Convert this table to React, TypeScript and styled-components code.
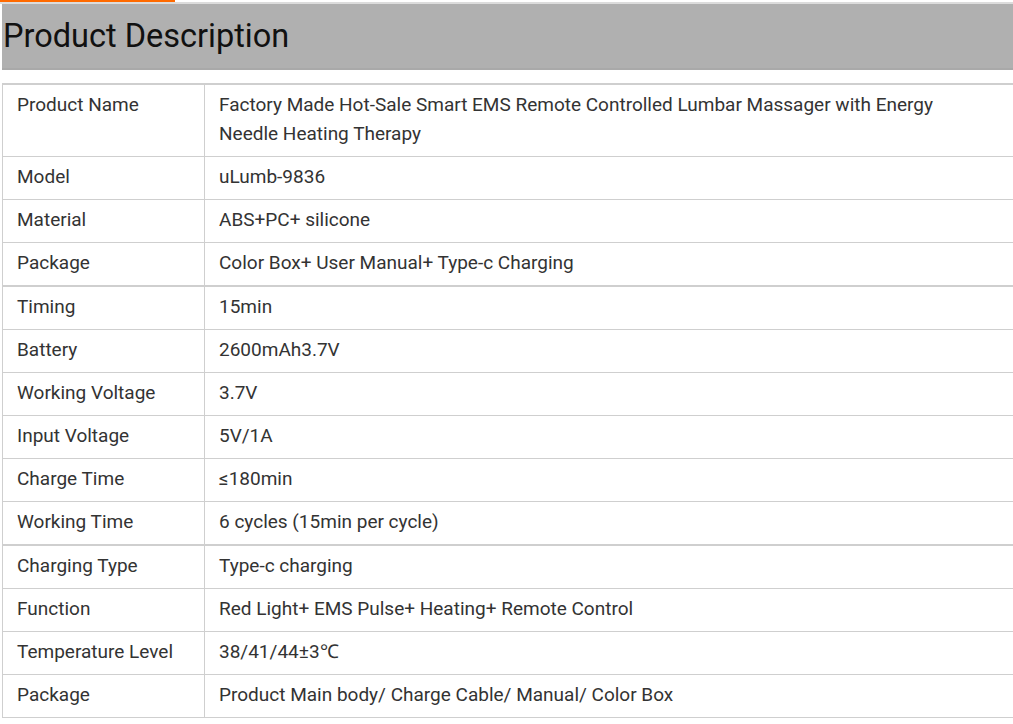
import React from 'react';
import styled, { createGlobalStyle } from 'styled-components';

const GlobalStyle = createGlobalStyle`
  html, body {
    margin: 0;
    padding: 0;
    background: #fff;
    overflow: hidden;
  }
  body {
    font-family: Roboto, "Liberation Sans", Arial, sans-serif;
  }
`;

const Page = styled.div`
  width: 1013px;
  overflow: hidden;
`;

const TopStrip = styled.div`
  height: 2px;
  border-bottom: 2px solid #dcdcdc;
  position: relative;
  &::before {
    content: '';
    position: absolute;
    left: 0;
    top: 0;
    width: 175px;
    height: 2px;
    background: #ff6a00;
  }
`;

const Section = styled.div`
  margin-left: 2px;
  width: 1030px;
`;

const Header = styled.h2`
  margin: 0;
  height: 64px;
  background: #b0b0b0;
  border-bottom: 2px solid #a9a9a9;
  color: #111;
  font-weight: 400;
  font-size: 32.5px;
  line-height: 64px;
  padding-left: 1px;
`;

const SpecTable = styled.table`
  margin-top: 13px;
  width: 100%;
  border-collapse: collapse;
  border-top: 2px solid #cfcfcf;
  font-size: 19px;
  color: #333;
`;

const Row = styled.tr<{ $thick?: boolean }>`
  border-top: ${p => (p.$thick ? '2px' : '1px')} solid #cfcfcf;
`;

const Cell = styled.td<{ $label?: boolean }>`
  border: 1px solid #cfcfcf;
  border-top: none;
  vertical-align: top;
  line-height: 29px;
  padding: 5px 14px 8px 14px;
  width: ${p => (p.$label ? '173px' : 'auto')};
  padding-right: ${p => (p.$label ? '14px' : '70px')};
`;

const specs: { name: string; value: string; thick?: boolean }[] = [
  { name: 'Product Name', value: 'Factory Made Hot-Sale Smart EMS Remote Controlled Lumbar Massager with Energy Needle Heating Therapy' },
  { name: 'Model', value: 'uLumb-9836' },
  { name: 'Material', value: 'ABS+PC+ silicone' },
  { name: 'Package', value: 'Color Box+ User Manual+ Type-c Charging' },
  { name: 'Timing', value: '15min', thick: true },
  { name: 'Battery', value: '2600mAh3.7V' },
  { name: 'Working Voltage', value: '3.7V' },
  { name: 'Input Voltage', value: '5V/1A' },
  { name: 'Charge Time', value: '≤180min' },
  { name: 'Working Time', value: '6 cycles (15min per cycle)' },
  { name: 'Charging Type', value: 'Type-c charging', thick: true },
  { name: 'Function', value: 'Red Light+ EMS Pulse+ Heating+ Remote Control' },
  { name: 'Temperature Level', value: '38/41/44±3℃' },
  { name: 'Package', value: 'Product Main body/ Charge Cable/ Manual/ Color Box' },
];

const App: React.FC = () => {
  return (
    <Page>
      <GlobalStyle />
      <TopStrip />
      <Section>
        <Header>Product Description</Header>
        <SpecTable>
          <tbody>
            {specs.map((s, i) => (
              <Row key={i} $thick={s.thick}>
                <Cell $label>{s.name}</Cell>
                <Cell>{s.value}</Cell>
              </Row>
            ))}
          </tbody>
        </SpecTable>
      </Section>
    </Page>
  );
};

export default App;
